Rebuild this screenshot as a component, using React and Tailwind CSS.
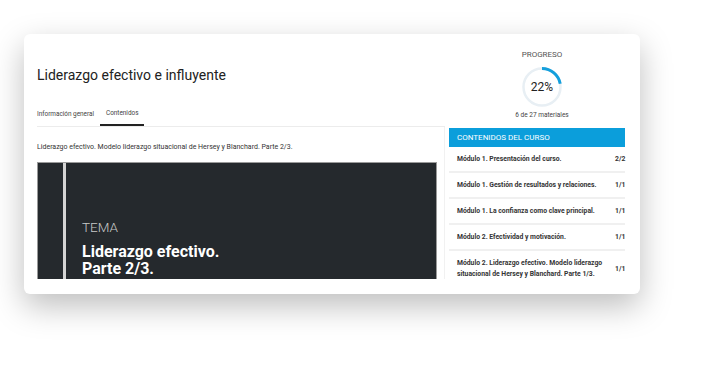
import React from "react";

const modules = [
  { title: "Módulo 1. Presentación del curso.", done: "2/2" },
  { title: "Módulo 1. Gestión de resultados y relaciones.", done: "1/1" },
  { title: "Módulo 1. La confianza como clave principal.", done: "1/1" },
  { title: "Módulo 2. Efectividad y motivación.", done: "1/1" },
];

function ProgressRing({ value }) {
  const r = 18.5;
  const c = 2 * Math.PI * r;
  return (
    <div className="relative w-[40px] h-[40px]">
      <svg width="40" height="40" viewBox="0 0 40 40" className="-rotate-90">
        <circle cx="20" cy="20" r={r} fill="none" stroke="#e8eff4" strokeWidth="2.5" />
        <circle
          cx="20"
          cy="20"
          r={r}
          fill="none"
          stroke="#149fdc"
          strokeWidth="3"
          strokeDasharray={`${(c * value) / 100} ${c}`}
        />
      </svg>
      <div className="absolute inset-0 flex items-center justify-center text-[12px] text-[#222]">
        {value}%
      </div>
    </div>
  );
}

export default function App() {
  return (
    <div className="w-[719px] h-[367px] bg-white overflow-hidden font-['Roboto',sans-serif]">
      <div className="ml-[24px] mt-[34px] w-[616px] h-[260px] rounded-[6px] bg-white shadow-[0_12px_32px_rgba(0,0,0,0.26)] pl-[13px] pr-[14px] pb-[15px]">
        <div className="h-full overflow-hidden flex flex-col">
          {/* cabecera */}
          <div className="flex">
            <div className="flex-1 mr-[5px]">
              <h1 className="pt-[31px] text-[14px] leading-[20px] text-[#222]">
                Liderazgo efectivo e influyente
              </h1>
              <div className="mt-[19px] flex border-b border-[#ececec] text-[6.4px] text-[#444]">
                <div className="h-[22px] flex items-center">Información general</div>
                <div className="ml-[6px] h-[22px] px-[6px] flex items-center border-b-2 border-[#222]">
                  Contenidos
                </div>
              </div>
            </div>
            <div className="w-[176px] pl-[8px] pt-[16px] flex flex-col items-center">
              <div className="text-[8px] leading-[10px] text-[#555]">PROGRESO</div>
              <div className="mt-[7px]">
                <ProgressRing value={22} />
              </div>
              <div className="mt-[3px] text-[6.5px] leading-[10px] text-[#444]">6 de 27 materiales</div>
            </div>
          </div>

          {/* contenido */}
          <div className="flex flex-1 min-h-0">
            <div className="w-[408px] border-r border-[#f1f1f1] pr-[7px]">
              <p className="mt-[15px] text-[7px] leading-[10px] text-[#333]">
                Liderazgo efectivo. Modelo liderazgo situacional de Hersey y Blanchard. Parte 2/3.
              </p>
              <div className="mt-[10px] h-[200px] flex gap-[3px] bg-[#d4d4d4] border border-[#9a9a9a]">
                <div className="w-[25px] bg-[#25292d]" />
                <div className="flex-1 bg-[#25292d] pl-[16px] pt-[56px]">
                  <div className="text-[13.5px] leading-[16px] font-light text-[#c9c9c9]">TEMA</div>
                  <div className="mt-[8px] text-[16px] leading-[17px] font-bold text-white">
                    Liderazgo efectivo.
                    <br />
                    Parte 2/3.
                  </div>
                </div>
              </div>
            </div>

            <div className="w-[176px] ml-[4px]">
              <div className="mt-[1px] h-[19px] bg-[#0b9edb] pl-[8px] flex items-center text-[8px] text-white">
                CONTENIDOS DEL CURSO
              </div>
              {modules.map((m) => (
                <div
                  key={m.title}
                  className="h-[26px] flex items-center justify-between pl-[8px] border-b-2 border-[#f0f0f0] text-[6.8px] font-bold text-[#333]"
                >
                  <span>{m.title}</span>
                  <span className="w-[10px]">{m.done}</span>
                </div>
              ))}
              <div className="h-[36px] flex items-center justify-between pl-[8px] text-[6.8px] font-bold text-[#333]">
                <span className="leading-[11px]">
                  Módulo 2. Liderazgo efectivo. Modelo liderazgo
                  <br />
                  situacional de Hersey y Blanchard. Parte 1/3.
                </span>
                <span className="w-[10px]">1/1</span>
              </div>
            </div>
          </div>
        </div>
      </div>
    </div>
  );
}
